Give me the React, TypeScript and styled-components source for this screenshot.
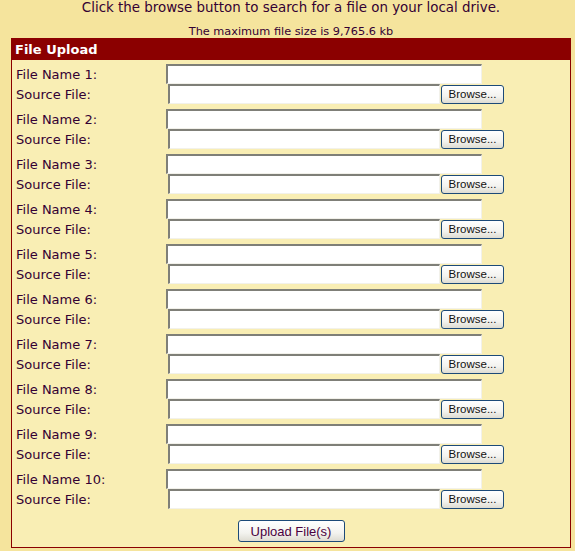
import React from "react";
import styled, { createGlobalStyle } from "styled-components";

const GlobalStyle = createGlobalStyle`
  html, body {
    margin: 0;
    padding: 0;
    background: #f5e49d;
  }
  body {
    font-family: "DejaVu Sans", Verdana, sans-serif;
    color: #330033;
  }
`;

const Page = styled.div`
  width: 575px;
  height: 551px;
  overflow: hidden;
`;

const Intro = styled.div`
  margin-left: 11px;
  width: 560px;
  text-align: center;
`;

const IntroLine = styled.div`
  font-size: 13.4px;
  line-height: 15px;
`;

const SizeLine = styled.div`
  font-size: 11.3px;
  line-height: 12px;
  margin-top: 11px;
`;

const Panel = styled.div`
  margin: 0 0 0 11px;
  width: 558px;
  border: 1px solid #8b0000;
  background: #f9eeb4;
`;

const Header = styled.div`
  height: 21px;
  background: #8b0000;
  color: #ffffff;
  font-weight: bold;
  font-size: 13px;
  line-height: 21px;
  padding-left: 3px;
`;

const Rows = styled.div`
  display: flex;
  flex-direction: column;
  gap: 5px;
  padding: 4px 0 0 4px;
`;

const Group = styled.div`
  display: grid;
  grid-template-columns: 150px 1fr;
  grid-auto-rows: 20px;
  align-items: center;
`;

const Label = styled.span`
  font-size: 13px;
  line-height: 16px;
  padding-top: 1px;
  white-space: nowrap;
`;

const Field = styled.input<{ $width: number; $offset?: number }>`
  box-sizing: border-box;
  width: ${(p) => p.$width}px;
  height: 20px;
  margin: 0 0 0 ${(p) => p.$offset ?? 0}px;
  padding: 0 2px;
  background: #ffffff;
  border-style: solid;
  border-width: 2px 1px 1px 2px;
  border-color: #7f7f78 #f2f1ea #f2f1ea #7f7f78;
  outline: none;
`;

const SourceCell = styled.div`
  display: flex;
  align-items: center;
  height: 20px;
`;

const XpButton = styled.button`
  box-sizing: border-box;
  border: 1px solid #1c4a78;
  border-radius: 3px;
  background: linear-gradient(#ffffff, #f3f3ef 60%, #dedcd2);
  font-family: "Liberation Sans", Arial, sans-serif;
  padding: 0;
  cursor: pointer;
`;

const BrowseButton = styled(XpButton)`
  width: 63px;
  height: 19px;
  margin-left: 1px;
  font-size: 11.5px;
  color: #111111;
`;

const Footer = styled.div`
  display: flex;
  justify-content: center;
  padding: 11px 0 5px 0;
`;

const UploadButton = styled(XpButton)`
  width: 107px;
  height: 22px;
  font-size: 13px;
  color: #4a0040;
`;

const files = Array.from({ length: 10 }, (_, i) => i + 1);

export default function App() {
  return (
    <Page>
      <GlobalStyle />
      <Intro>
        <IntroLine>Click the browse button to search for a file on your local drive.</IntroLine>
        <SizeLine>The maximum file size is 9,765.6 kb</SizeLine>
      </Intro>
      <Panel>
        <Header>File Upload</Header>
        <Rows>
          {files.map((n) => (
            <Group key={n}>
              <Label>File Name {n}:</Label>
              <Field type="text" $width={316} />
              <Label>Source File:</Label>
              <SourceCell>
                <Field type="text" $width={272} $offset={2} readOnly />
                <BrowseButton type="button">Browse...</BrowseButton>
              </SourceCell>
            </Group>
          ))}
        </Rows>
        <Footer>
          <UploadButton type="button">Upload File(s)</UploadButton>
        </Footer>
      </Panel>
    </Page>
  );
}
